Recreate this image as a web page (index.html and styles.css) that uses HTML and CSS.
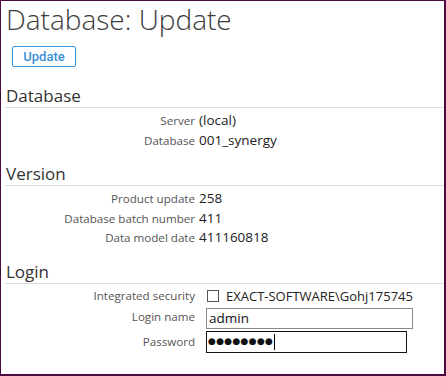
FILE: index.html
```html
<!DOCTYPE html>
<html lang="en">
<head>
  <meta charset="UTF-8" />
  <title>Database: Update</title>
  <link rel="stylesheet" href="styles.css">
</head>
<body>
  <div class="window">
    <h1>Database: Update</h1>
    <div class="toolbar">
      <button class="btn">Update</button>
    </div>

    <h2 class="section">Database</h2>
    <div class="fields">
      <div class="label">Server</div>
      <div class="value">(local)</div>
      <div class="label">Database</div>
      <div class="value">001_synergy</div>
    </div>

    <h2 class="section">Version</h2>
    <div class="fields">
      <div class="label">Product update</div>
      <div class="value">258</div>
      <div class="label">Database batch number</div>
      <div class="value">411</div>
      <div class="label">Data model date</div>
      <div class="value">411160818</div>
    </div>

    <h2 class="section">Login</h2>
    <div class="fields">
      <div class="label row-check">Integrated security</div>
      <div class="value row-check check-row">
        <span class="checkbox"></span>
        <span>EXACT-SOFTWARE\Gohj175745</span>
      </div>
      <div class="label row-input">Login name</div>
      <div class="value row-input"><div class="input login">admin</div></div>
      <div class="label row-input">Password</div>
      <div class="value row-input"><div class="input password"><span class="dots">&#9679;&#9679;&#9679;&#9679;&#9679;&#9679;&#9679;&#9679;</span><span class="caret"></span></div></div>
    </div>
  </div>
</body>
</html>
```

FILE: styles.css
```css
/* Dialog window */
body {
  margin: 0;
  font-family: 'Open Sans', 'Noto Sans', sans-serif;
  background: #ffffff;
}

.window {
  box-sizing: border-box;
  width: 446px;
  height: 376px;
  border-style: solid;
  border-color: #4a0b40;
  border-width: 1px 2px 2px 1px;
  padding: 0 0 0 4px;
}

h1 {
  margin: 0;
  padding: 0 0 0 1px;
  font-size: 28px;
  font-weight: 300;
  line-height: 36px;
  color: #3c3c3c;
}

.toolbar {
  padding: 9px 0 0 7px;
  height: 21px;
}

.btn {
  display: block;
  font-family: Roboto, 'Liberation Sans', sans-serif;
  font-size: 13px;
  font-weight: 500;
  color: #3a90d8;
  background: #ffffff;
  border: 1px solid #3a95da;
  border-radius: 2px;
  width: 64px;
  height: 21px;
  padding: 0;
}

.section {
  margin: 13px 0 0 0;
  padding: 0 0 0 1px;
  font-size: 17px;
  font-weight: 400;
  line-height: 22px;
  color: #333333;
  border-bottom: 1px solid #dddddd;
}

.toolbar + .section {
  margin-top: 18px;
}

.fields {
  display: grid;
  grid-template-columns: 190px 1fr;
  column-gap: 4px;
  padding-top: 3px;
}

.label {
  font-size: 11.6px;
  line-height: 19.5px;
  text-align: right;
  color: #555555;
}

.value {
  font-size: 13.5px;
  line-height: 19.5px;
  color: #222222;
}

.row-check {
  line-height: 18px;
}

.row-input {
  line-height: 23px;
}

.check-row {
  display: flex;
  align-items: center;
  gap: 7px;
  font-size: 13px;
}

.checkbox {
  box-sizing: border-box;
  width: 12px;
  height: 12px;
  border: 1px solid #555555;
  margin-left: 8px;
}

.input {
  box-sizing: border-box;
  display: flex;
  align-items: center;
  margin: 1px 0 1px 7px;
  height: 21px;
  padding: 0 2px;
  font-size: 13.5px;
  color: #111111;
}

.login {
  width: 207px;
  margin-top: 3px;
  border: 1px solid #8a8a8a;
}

.password {
  width: 201px;
  height: 22px;
  padding-left: 1px;
  border: 1px solid #111111;
}

.dots {
  font-family: 'DejaVu Sans', sans-serif;
  font-size: 9px;
  letter-spacing: 0.3px;
}

.caret {
  width: 1px;
  height: 16px;
  margin-left: 1px;
  background: #000000;
}
```
